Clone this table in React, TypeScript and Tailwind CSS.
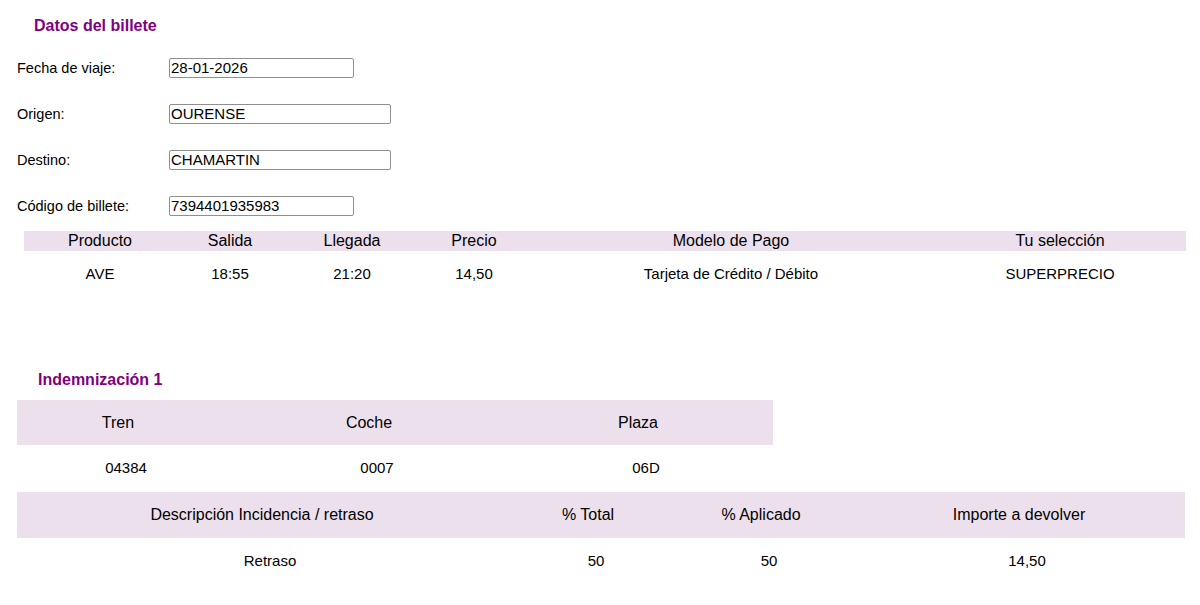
export default function App() {
  const fields = [
    { label: "Fecha de viaje:", value: "28-01-2026", w: "w-[185px]" },
    { label: "Origen:", value: "OURENSE", w: "w-[222px]" },
    { label: "Destino:", value: "CHAMARTIN", w: "w-[222px]" },
    { label: "Código de billete:", value: "7394401935983", w: "w-[185px]" },
  ];

  const prodCols = ["w-[152px]", "w-[108px]", "w-[136px]", "w-[108px]", "w-[406px]", "w-[252px]"];
  const prodHead = ["Producto", "Salida", "Llegada", "Precio", "Modelo de Pago", "Tu selección"];
  const prodRow = ["AVE", "18:55", "21:20", "14,50", "Tarjeta de Crédito / Débito", "SUPERPRECIO"];

  const trenCols = ["w-[202px]", "w-[300px]", "w-[238px]"];
  const descCols = ["w-[490px]", "w-[162px]", "w-[184px]", "w-[332px]"];

  return (
    <div className="min-h-screen bg-white text-black font-['Liberation_Sans',Arial,sans-serif]">
      {/* Datos del billete */}
      <h2 className="pl-[34px] pt-[17px] text-[16px] leading-[18px] font-bold text-[#800080]">
        Datos del billete
      </h2>

      <div className="mt-[10px] pl-[17px]">
        {fields.map((f) => (
          <div key={f.label} className="flex items-center h-[46px]">
            <label className="w-[152px] pt-[1px] text-[14.5px]">{f.label}</label>
            <input
              readOnly
              value={f.value}
              className={`${f.w} h-[20px] border border-[#8f8f8f] rounded-[2px] px-[1px] text-[15px] text-black outline-none`}
            />
          </div>
        ))}
      </div>

      {/* Producto table */}
      <div className="ml-[24px] w-[1162px] mt-[2px]">
        <div className="flex h-[20px] items-center bg-[#ede0ed] text-[16px]">
          {prodHead.map((h, i) => (
            <div key={h} className={`${prodCols[i]} text-center`}>
              {h}
            </div>
          ))}
        </div>
        <div className="flex h-[46px] items-center text-[15px]">
          {prodRow.map((c, i) => (
            <div key={i} className={`${prodCols[i]} text-center`}>
              {c}
            </div>
          ))}
        </div>
      </div>

      {/* Indemnización */}
      <h2 className="mt-[74px] pl-[38px] text-[16px] leading-[18px] font-bold text-[#800080]">
        Indemnización 1
      </h2>

      <div className="ml-[17px] mt-[11px]">
        <div className="w-[756px]">
          <div className="flex h-[45px] items-center bg-[#ede0ed] text-[16px]">
            {["Tren", "Coche", "Plaza"].map((h, i) => (
              <div key={h} className={`${trenCols[i]} text-center`}>
                {h}
              </div>
            ))}
          </div>
          <div className="flex h-[47px] items-center text-[15px]">
            {["04384", "0007", "06D"].map((c, i) => (
              <div key={c} className={`${trenCols[i]} pl-[16px] text-center`}>
                {c}
              </div>
            ))}
          </div>
        </div>

        <div className="w-[1168px]">
          <div className="flex h-[46px] items-center bg-[#ede0ed] text-[16px]">
            {["Descripción Incidencia / retraso", "% Total", "% Aplicado", "Importe a devolver"].map((h, i) => (
              <div key={h} className={`${descCols[i]} text-center`}>
                {h}
              </div>
            ))}
          </div>
          <div className="flex h-[46px] items-center text-[15px]">
            {["Retraso", "50", "50", "14,50"].map((c, i) => (
              <div key={i} className={`${descCols[i]} pl-[16px] text-center`}>
                {c}
              </div>
            ))}
          </div>
        </div>
      </div>
    </div>
  );
}
